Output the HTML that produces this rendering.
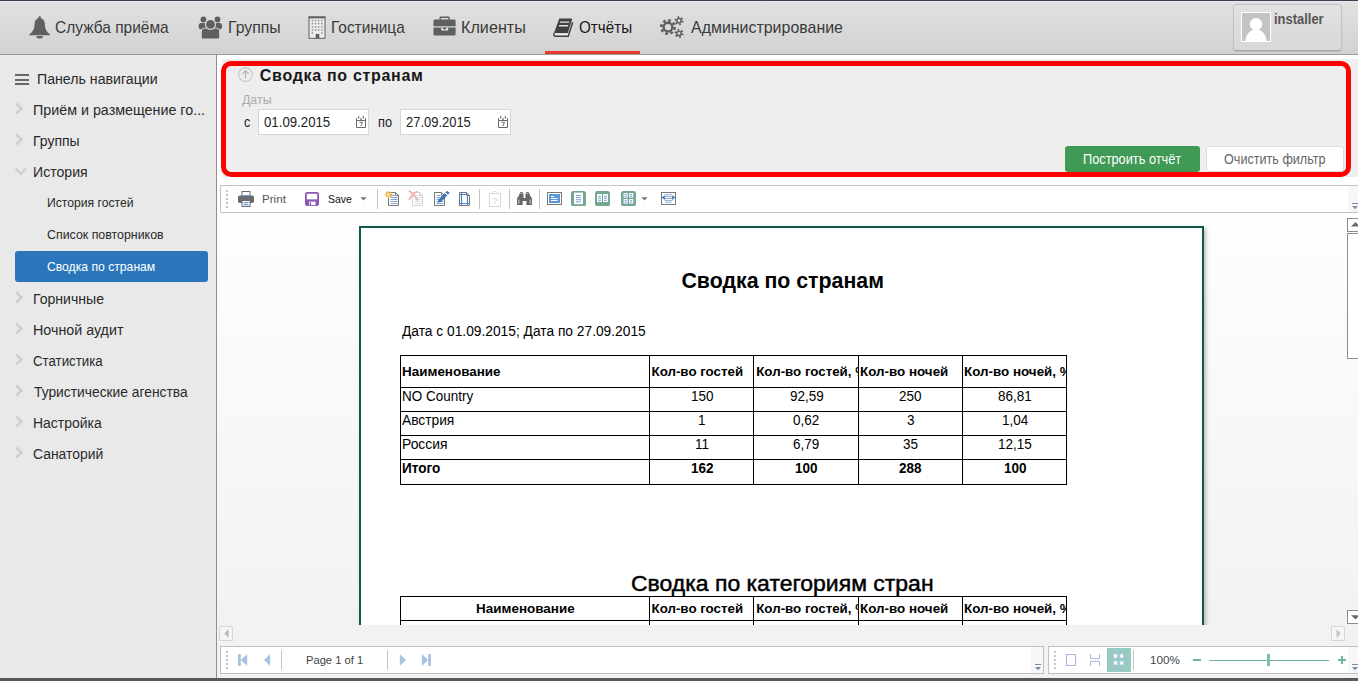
<!DOCTYPE html>
<html lang="ru">
<head>
<meta charset="utf-8">
<title>Сводка по странам</title>
<style>
*{box-sizing:border-box}
html,body{margin:0;padding:0}
body{width:1358px;height:681px;overflow:hidden;position:relative;background:#fff;font-family:"Liberation Sans",sans-serif}
.a{position:absolute}
.t{position:absolute;white-space:nowrap;transform-origin:0 0;z-index:5}
#top{left:0;top:0;width:1358px;height:55px;background:linear-gradient(#e1e1e1,#d2d2d2);border-top:1px solid #364252;border-bottom:1px solid #9a9a9a;box-shadow:inset 0 1px 0 #e9e9e9}
#side{left:0;top:55px;width:217px;height:623px;background:#e9e9e9;border-right:1px solid #8f8f8f}
#sel{left:15px;top:251px;width:193px;height:31px;background:#2b76bb;border-radius:3px}
#foot{left:0;top:678px;width:1358px;height:3px;background:#585858}
#fp{left:222px;top:59px;width:1136px;height:118px;background:#eee}
#fr{left:221px;top:61px;width:1130px;height:116px;border:5px solid #fe0000;border-radius:10px}
.inp{background:#fff;border:1px solid #d6d6d6;height:26px;top:109px}
.btn{top:146px;height:26px;border-radius:3px}
#tb1{left:220px;top:185px;width:1140px;height:28px;background:#fff;border:1px solid #c2c2c2}
#view{left:217px;top:213px;width:1141px;height:465px;background:linear-gradient(#fefefe,#f2f2f2 412px,#f2f2f2)}
#page{left:142px;top:13px;width:845px;height:420px;background:#fff;border:2px solid #10574d;border-bottom:none;box-shadow:2px 2px 4px rgba(0,0,0,.25)}
.sep{width:1px;background:#c4c4c4}
.sb{background:#fff;border:1px solid #8c8c8c}
.hb{background:#f5f5f5;border:1px solid #d6d6d6}
.tb{background:#fff;border:1px solid #bfbfbf}
.clip{position:absolute;overflow:hidden;z-index:5}
.hl{position:absolute;height:1px;background:#000;left:400px;width:667px}
.vl{position:absolute;width:1px;background:#000}
</style>
</head>
<body>
<div id="top" class="a"></div>
<div id="side" class="a"></div>
<div id="sel" class="a"></div>
<div id="fp" class="a"></div>
<div id="fr" class="a"></div>
<div class="a inp" style="left:258px;width:111px"></div>
<div class="a inp" style="left:400px;width:111px"></div>
<div class="a btn" style="left:1065px;width:135px;background:#3f9a55"></div>
<div class="a btn" style="left:1206px;width:138px;background:#fff;border:1px solid #dcdcdc"></div>
<!-- filter icons -->
<svg class="a" style="left:238px;top:67px" width="15" height="15" viewBox="0 0 15 15"><circle cx="7.500" cy="7.500" r="6.900" fill="none" stroke="#c4c4c4" stroke-width="1.100"/><path d="M7.500 11.400V3.800M4.200 7L7.500 3.600L10.800 7" fill="none" stroke="#b2b2b2" stroke-width="1.200"/></svg>
<svg class="a" style="left:356px;top:116px" width="10" height="12" viewBox="0 0 10 12"><g fill="none" stroke="#6b6b6b"><path d="M.5 2v9.500h9V2M.5 4.500h9" stroke-width="1"/><path d="M2.700 0v2.600M7.300 0v2.600" stroke-width="1.100"/><path d="M5 2.200v2" stroke-width="1.400"/><path d="M3.400 6.300h3.200L4.700 10" stroke-width="1"/></g></svg>
<svg class="a" style="left:498px;top:116px" width="10" height="12" viewBox="0 0 10 12"><g fill="none" stroke="#6b6b6b"><path d="M.5 2v9.500h9V2M.5 4.500h9" stroke-width="1"/><path d="M2.700 0v2.600M7.300 0v2.600" stroke-width="1.100"/><path d="M5 2.200v2" stroke-width="1.400"/><path d="M3.400 6.300h3.200L4.700 10" stroke-width="1"/></g></svg>
<div id="view" class="a"></div>
<div id="tb1" class="a"></div>
<div class="a" style="left:217px;top:213px;width:1141px;height:412px;overflow:hidden"><div id="page" class="a"></div></div>
<!-- toolbar 1 icons -->
<div class="a" style="left:226px;top:190px;width:2px;height:2px;background:#c4c4c4"></div><div class="a" style="left:226px;top:194px;width:2px;height:2px;background:#c4c4c4"></div><div class="a" style="left:226px;top:198px;width:2px;height:2px;background:#c4c4c4"></div><div class="a" style="left:226px;top:202px;width:2px;height:2px;background:#c4c4c4"></div><div class="a" style="left:226px;top:206px;width:2px;height:2px;background:#c4c4c4"></div>
<svg class="a" style="left:238px;top:191px" width="16" height="16" viewBox="0 0 16 16"><rect x="0" y="4.500" width="16" height="7.500" rx="1.800" fill="#6b6b6b"/><rect x="4" y=".5" width="8" height="5" fill="#fff" stroke="#6b6b6b"/><rect x="4.500" y="4.200" width="7" height="1" fill="#4a86d0"/><rect x="4" y="9.500" width="8" height="6" fill="#fff" stroke="#6b6b6b"/><rect x="5.600" y="11.200" width="4.800" height="1" fill="#4a86d0"/><rect x="5.600" y="13.200" width="4.800" height="1" fill="#4a86d0"/></svg>
<svg class="a" style="left:305px;top:192px" width="14" height="14" viewBox="0 0 14 14"><rect x=".9" y=".9" width="12.200" height="12.200" rx="1.300" fill="#fff" stroke="#8e57b6" stroke-width="1.800"/><rect x="1" y="7.400" width="12" height="5.800" fill="#8e57b6"/><rect x="4" y="9.600" width="6.500" height="3.600" fill="#fff"/><rect x="4.800" y="10.300" width="1.300" height="2.900" fill="#8e57b6"/></svg>
<svg class="a" style="left:360px;top:197px" width="7" height="4" viewBox="0 0 7 4"><path d="M.3 .3h6.400L3.500 3.600z" fill="#7a7a7a"/></svg>
<div class="a sep" style="left:377px;top:189px;height:20px"></div>
<svg class="a" style="left:388px;top:191px;overflow:visible" width="12" height="15" viewBox="0 0 12 15"><path d="M.5 1.500h7l3 3v10H.5z" fill="#fff" stroke="#777"/><path d="M7.500 1.500v3h3" fill="none" stroke="#777"/><g stroke="#7ea3d4" stroke-width="1"><path d="M2.500 4.5h4"/><path d="M2.500 6.5h7"/><path d="M2.500 8.5h7"/><path d="M2.500 10.5h7"/><path d="M2.500 12.5h7"/></g><g stroke="#e9b646" stroke-width="1.300"><path d="M.5 -.2v7.400M-3.200 3.500h7.400M-2.100 .9l5.200 5.200M3.100 .9l-5.200 5.200"/></g><circle cx=".5" cy="3.500" r="1.100" fill="#fff"/></svg>
<svg class="a" style="left:412px;top:191px;overflow:visible" width="12" height="15" viewBox="0 0 12 15"><path d="M.5 1.500h7l3 3v10H.5z" fill="#fff" stroke="#d4d4d4"/><path d="M7.500 1.500v3h3" fill="none" stroke="#d4d4d4"/><g stroke="#d6e0ee" stroke-width="1"><path d="M2.500 4.5h4"/><path d="M2.500 6.5h7"/><path d="M2.500 8.5h7"/><path d="M2.500 10.5h7"/><path d="M2.500 12.5h7"/></g><g stroke="#f1b3a8" stroke-width="1.700" fill="none"><path d="M-3 -.5C0 2 3 5 6 9.500"/><path d="M5.500 .2C1.500 2.500 -1.500 5.500 -3 9"/></g></svg>
<svg class="a" style="left:434px;top:191px;overflow:visible" width="12" height="15" viewBox="0 0 12 15"><path d="M.5 1.500h7l3 3v10H.5z" fill="#fff" stroke="#777"/><path d="M7.500 1.500v3h3" fill="none" stroke="#777"/><g stroke="#7ea3d4" stroke-width="1"><path d="M2.500 4.5h4"/><path d="M2.500 6.5h7"/><path d="M2.500 8.5h7"/><path d="M2.500 10.5h7"/><path d="M2.500 12.5h7"/></g><path d="M13.300 -.3l2.400 2.400-1.700 1.700-2.400-2.400zM10.800 2.200l2.400 2.400-6.300 6.300-3.300 .9 .9-3.300z" fill="#3b76ba"/></svg>
<svg class="a" style="left:459px;top:191px" width="12" height="15" viewBox="0 0 12 15"><path d="M.5 1.500h7l3 3v10H.5z" fill="#fff" stroke="#777"/><path d="M7.500 1.500v3h3" fill="none" stroke="#777"/><g stroke="#4d86cc" stroke-width="1.200"><path d="M2.500 2v12M8.500 3.500v10.500M1 3.500h7M1 12.500h9"/></g></svg>
<div class="a sep" style="left:479px;top:189px;height:20px"></div>
<svg class="a" style="left:489px;top:191px" width="12" height="16" viewBox="0 0 12 16"><rect x=".5" y="2.500" width="11" height="13" fill="#fff" stroke="#d9d9d9"/><path d="M3.500 2.500c0-1 1-2.200 2.500-2.200s2.500 1.200 2.500 2.200z" fill="#fff" stroke="#d9d9d9"/><text x="6" y="12.500" font-family="Liberation Sans, sans-serif" font-size="9" fill="#c3d3ea" text-anchor="middle">?</text></svg>
<div class="a sep" style="left:509px;top:189px;height:20px"></div>
<svg class="a" style="left:517px;top:192px" width="15" height="13" viewBox="0 0 15 13"><g fill="#686868"><path d="M3.300 0h2.400v1.500h.8V6h2V1.500h.8V0h2.400v1.500h.8l.7 2.500 1.200 1.300.6 1.700v6H9.400V9H5.600v4H0V7l.6-1.700L1.800 4l.7-2.500h.8z"/></g><g fill="#d4d4d4"><rect x="1.300" y="7.500" width="1" height="4.300"/><rect x="12.700" y="7.500" width="1" height="4.300"/><rect x="3.800" y="1" width="1.200" height="1"/><rect x="10" y="1" width="1.200" height="1"/></g></svg>
<div class="a sep" style="left:539px;top:189px;height:20px"></div>
<svg class="a" style="left:547px;top:192px" width="15" height="13" viewBox="0 0 15 13"><rect x=".5" y=".5" width="14" height="12" fill="#fff" stroke="#777"/><rect x="2" y="2" width="11" height="9" fill="#5c97d8"/><g stroke="#fff" stroke-width="1"><path d="M4 4.500h3M4 6.500h6.500M4 8.500h6.500"/></g></svg>
<svg class="a" style="left:571px;top:191px" width="15" height="15" viewBox="0 0 15 15"><rect width="15" height="15" rx="2.600" fill="#72a791"/><rect x="3" y="1.600" width="9" height="11.600" fill="#fff"/><g stroke="#7ea3d4" stroke-width="1"><path d="M5 4.500h5M5 6.600h5M5 8.700h5M5 10.800h5"/></g></svg>
<svg class="a" style="left:595px;top:191px" width="15" height="15" viewBox="0 0 15 15"><rect width="15" height="15" rx="2.600" fill="#72a791"/><rect x="2" y="3" width="5" height="8" fill="#fff"/><rect x="8" y="3" width="5" height="8" fill="#fff"/><g stroke="#7ea3d4" stroke-width="1"><path d="M3 5.300h3M3 7.300h3M3 9.300h3M9 5.300h3M9 7.300h3M9 9.300h3"/></g></svg>
<svg class="a" style="left:621px;top:191px" width="15" height="15" viewBox="0 0 15 15"><rect width="15" height="15" rx="2.600" fill="#72a791"/><rect x="2.600" y="2" width="4.200" height="4.600" fill="#fff"/><rect x="8.100" y="2" width="4.200" height="4.600" fill="#fff"/><rect x="2.600" y="8" width="4.200" height="4.600" fill="#fff"/><rect x="8.100" y="8" width="4.200" height="4.600" fill="#fff"/><g stroke="#7ea3d4" stroke-width="1"><path d="M3.600 3.600h2.200M3.600 5.300h2.200M9.100 3.600h2.200M9.100 5.300h2.200M3.600 9.600h2.200M3.600 11.300h2.200M9.100 9.600h2.200M9.100 11.300h2.200"/></g></svg>
<svg class="a" style="left:641px;top:197px" width="7" height="4" viewBox="0 0 7 4"><path d="M.3 .3h6.400L3.500 3.600z" fill="#7a7a7a"/></svg>
<svg class="a" style="left:661px;top:192px" width="15" height="13" viewBox="0 0 15 13"><rect x=".5" y=".5" width="14" height="12" fill="#fff" stroke="#777"/><g stroke="#8aaad6" stroke-width="1"><path d="M4 2.700h7M3.500 4.600h8M3.500 6.500h8M3.500 8.400h8M4.500 10.300h6"/></g><path d="M.8 5.500L3.800 3v5zM14.200 5.500L11.200 3v5z" fill="#3b76ba"/></svg>
<div class="a" style="left:1348px;top:186px;width:10px;height:26px;background:#f6f6f6"></div>
<svg class="a" style="left:1352px;top:203px" width="6" height="7" viewBox="0 0 6 7"><path d="M0 .5h6" stroke="#7d8da8" stroke-width="1"/><path d="M0 3h6L3 6.300z" fill="#7d8da8"/></svg>

<div class="hl" style="top:355px"></div>
<div class="hl" style="top:387px"></div>
<div class="hl" style="top:411px"></div>
<div class="hl" style="top:435px"></div>
<div class="hl" style="top:459px"></div>
<div class="hl" style="top:484px"></div>
<div class="hl" style="top:596px"></div>
<div class="hl" style="top:620px"></div>
<div class="vl" style="left:400px;top:355px;height:130px"></div>
<div class="vl" style="left:400px;top:596px;height:29px"></div>
<div class="vl" style="left:649px;top:355px;height:130px"></div>
<div class="vl" style="left:649px;top:596px;height:29px"></div>
<div class="vl" style="left:753px;top:355px;height:130px"></div>
<div class="vl" style="left:753px;top:596px;height:29px"></div>
<div class="vl" style="left:858px;top:355px;height:130px"></div>
<div class="vl" style="left:858px;top:596px;height:29px"></div>
<div class="vl" style="left:962px;top:355px;height:130px"></div>
<div class="vl" style="left:962px;top:596px;height:29px"></div>
<div class="vl" style="left:1066px;top:355px;height:130px"></div>
<div class="vl" style="left:1066px;top:596px;height:29px"></div>
<!-- sidebar icons -->
<div class="a" style="left:15px;top:74px;width:14px;height:2px;background:#686868"></div>
<div class="a" style="left:15px;top:78.500px;width:14px;height:2px;background:#686868"></div>
<div class="a" style="left:15px;top:83px;width:14px;height:2px;background:#686868"></div>
<svg class="a" style="left:14px;top:102px" width="11" height="13" viewBox="0 0 11 13"><path d="M2.200 1.500L7.600 6.500L2.200 11.500" fill="none" stroke="#cfcfcf" stroke-width="2.400"/></svg>
<svg class="a" style="left:14px;top:133px" width="11" height="13" viewBox="0 0 11 13"><path d="M2.200 1.500L7.600 6.500L2.200 11.500" fill="none" stroke="#cfcfcf" stroke-width="2.400"/></svg>
<svg class="a" style="left:14px;top:166.5px" width="14" height="10" viewBox="0 0 14 10"><path d="M1.600 1.700L6.800 6.800L12 1.700" fill="none" stroke="#cfcfcf" stroke-width="2.400"/></svg>
<svg class="a" style="left:14px;top:291px" width="11" height="13" viewBox="0 0 11 13"><path d="M2.200 1.500L7.600 6.500L2.200 11.500" fill="none" stroke="#cfcfcf" stroke-width="2.400"/></svg>
<svg class="a" style="left:14px;top:322px" width="11" height="13" viewBox="0 0 11 13"><path d="M2.200 1.500L7.600 6.500L2.200 11.500" fill="none" stroke="#cfcfcf" stroke-width="2.400"/></svg>
<svg class="a" style="left:14px;top:353px" width="11" height="13" viewBox="0 0 11 13"><path d="M2.200 1.500L7.600 6.500L2.200 11.500" fill="none" stroke="#cfcfcf" stroke-width="2.400"/></svg>
<svg class="a" style="left:14px;top:384px" width="11" height="13" viewBox="0 0 11 13"><path d="M2.200 1.500L7.600 6.500L2.200 11.500" fill="none" stroke="#cfcfcf" stroke-width="2.400"/></svg>
<svg class="a" style="left:14px;top:415px" width="11" height="13" viewBox="0 0 11 13"><path d="M2.200 1.500L7.600 6.500L2.200 11.500" fill="none" stroke="#cfcfcf" stroke-width="2.400"/></svg>
<svg class="a" style="left:14px;top:446px" width="11" height="13" viewBox="0 0 11 13"><path d="M2.200 1.500L7.600 6.500L2.200 11.500" fill="none" stroke="#cfcfcf" stroke-width="2.400"/></svg>
<!-- header icons -->
<svg class="a" style="left:28.500px;top:15.500px" width="22" height="23" viewBox="0 0 22 23"><path fill="#5f5f5f" d="M10.700 .3c-.7 0-1.200.5-1.200 1.200v.7C7 2.900 5.600 5 5.600 8c0 5-2 8.200-5.200 10.400-.3.300-.1.800.3.800h20c.4 0 .6-.5.3-.8C17.800 16.200 15.800 13 15.800 8c0-3-1.400-5.100-3.900-5.800v-.7c0-.7-.5-1.200-1.200-1.200zM7.400 20.100a3.300 2.500 0 0 0 6.600 0z"/></svg>
<svg class="a" style="left:197.500px;top:15.500px" width="25" height="23" viewBox="0 0 25 23"><g fill="#5f5f5f"><circle cx="5.400" cy="3.500" r="2.900"/><circle cx="19.500" cy="3.500" r="2.900"/><rect x=".7" y="7.100" width="7.500" height="6.300" rx="2.600"/><rect x="16.700" y="7.100" width="7.300" height="6.300" rx="2.600"/></g><path fill="#5f5f5f" stroke="#dfdfdf" stroke-width="1.300" paint-order="stroke" d="M3.800 21.500v-6c0-2 1.200-3.100 3-3.100h11.400c1.800 0 3 1.100 3 3.100v6c0 .6-.4 1-1 1H4.800c-.6 0-1-.4-1-1z"/><circle cx="12.500" cy="8.400" r="5.500" fill="#dfdfdf"/><circle cx="12.500" cy="8.400" r="4.400" fill="#5f5f5f"/></svg>
<svg class="a" style="left:307.500px;top:15.500px" width="18" height="23" viewBox="0 0 18 23"><rect x="1" y="1" width="16" height="21.300" fill="#ececec" stroke="#5f5f5f" stroke-width="1"/><rect x=".5" y=".5" width="17" height="1.900" fill="#5f5f5f"/><g fill="#8c8c8c"><rect x="3.7" y="3.8" width="1.400" height="1.500"/><rect x="6.8" y="3.8" width="1.400" height="1.500"/><rect x="9.9" y="3.8" width="1.400" height="1.500"/><rect x="13.1" y="3.8" width="1.400" height="1.500"/><rect x="3.7" y="6.8" width="1.400" height="1.500"/><rect x="6.8" y="6.8" width="1.400" height="1.500"/><rect x="9.9" y="6.8" width="1.400" height="1.500"/><rect x="13.1" y="6.8" width="1.400" height="1.500"/><rect x="3.7" y="10.2" width="1.400" height="1.500"/><rect x="6.8" y="10.2" width="1.400" height="1.500"/><rect x="9.9" y="10.2" width="1.400" height="1.500"/><rect x="13.1" y="10.2" width="1.400" height="1.500"/><rect x="3.7" y="13.3" width="1.400" height="1.500"/><rect x="6.8" y="13.3" width="1.400" height="1.500"/><rect x="9.9" y="13.3" width="1.400" height="1.500"/><rect x="13.1" y="13.3" width="1.400" height="1.500"/><rect x="3.7" y="16.3" width="1.400" height="1.500"/><rect x="13.1" y="16.3" width="1.400" height="1.500"/></g><rect x="7.700" y="17.900" width="3.600" height="4.400" fill="#5f5f5f"/></svg>
<svg class="a" style="left:432.500px;top:15.500px" width="23" height="20" viewBox="0 0 23 20"><g fill="#5f5f5f"><path d="M7.700 .4h7.800c.7 0 1.200.5 1.200 1.200v2.200h-1.500V2H8v1.800H6.500V1.600c0-.7.5-1.200 1.200-1.200z"/><path d="M2 3.500h19.100c.9 0 1.500.6 1.500 1.500v5.200H.5V5c0-.9.600-1.500 1.500-1.500z"/><path d="M.5 11.500h22.100v6.400c0 .9-.6 1.500-1.500 1.500H2c-.9 0-1.500-.6-1.500-1.500z"/></g><rect x="8.200" y="11.500" width="6.900" height="2.900" rx=".5" fill="#e2e2e2"/><rect x="10" y="11.500" width="3.200" height="1.700" fill="#5f5f5f"/></svg>
<svg class="a" style="left:552.500px;top:17.500px" width="21" height="20" viewBox="0 0 21 20"><path fill="#404040" d="M6.300 .5H18.500c.5 0 .7.300 .6.700L14.800 15.100H1z"/><path fill="#f0f0f0" d="M1.900 15.900H15l-.4 1.300H2.100z"/><path d="M1.300 15.200c-1 1.700-.1 3.100 1.500 3.100H15.200L19.700 4.300" fill="none" stroke="#404040" stroke-width="1.500"/><path fill="#e6e6e6" d="M7.300 3.500h9.300l-.4 1.300H6.900zM6.200 7.100h9.200l-.4 1.400H5.800z"/></svg>
<svg class="a" style="left:660px;top:16px" width="24" height="23" viewBox="0 0 24 23"><g fill="none" stroke="#5f5f5f"><circle cx="8" cy="11.100" r="4.400" stroke-width="2.400"/><circle cx="8" cy="11.100" r="6.700" stroke-width="2.600" stroke-dasharray="2.700 2.560"/><circle cx="19" cy="4.800" r="2.200" stroke-width="1.500"/><circle cx="19" cy="4.800" r="3.700" stroke-width="1.700" stroke-dasharray="1.700 2.170"/><circle cx="19" cy="17.400" r="2.200" stroke-width="1.500"/><circle cx="19" cy="17.400" r="3.700" stroke-width="1.700" stroke-dasharray="1.700 2.170"/></g></svg>
<div class="a" style="left:545px;top:51px;width:95px;height:3px;background:#e8392b"></div>
<!-- user box -->
<div class="a" style="left:1233px;top:4px;width:109px;height:47px;border:1px solid #c2c2c2;border-bottom-color:#a8a8a8;border-radius:4px;background:linear-gradient(#e1e1e1,#d8d8d8);box-shadow:0 1px 1px rgba(0,0,0,.12)"></div>
<svg class="a" style="left:1241px;top:12px" width="30" height="30" viewBox="0 0 30 30"><rect x=".5" y=".5" width="29" height="29" fill="#c3c3c3" stroke="#fff"/><circle cx="15" cy="12.200" r="6.200" fill="#fff"/><path fill="#fff" d="M4.500 29c.3-6.500 4.500-11.800 10.500-11.800S25.200 22.500 25.500 29z"/></svg>
<!-- scrollbars -->
<div class="a sb" style="left:1347px;top:218px;width:14px;height:14px"></div>
<svg class="a" style="left:1351px;top:222px" width="7" height="5" viewBox="0 0 7 5"><path d="M0 4.500L4.500 0L9 4.500z" fill="#6a6a6a"/></svg>
<div class="a sb" style="left:1347px;top:233px;width:14px;height:126px"></div>
<div class="a sb" style="left:1347px;top:610px;width:14px;height:14px"></div>
<svg class="a" style="left:1351px;top:615px" width="7" height="5" viewBox="0 0 7 5"><path d="M0 .2h9L4.500 4.500z" fill="#6a6a6a"/></svg>
<div class="a hb" style="left:219px;top:626px;width:14px;height:15px"></div>
<svg class="a" style="left:224px;top:629px" width="5" height="9" viewBox="0 0 5 9"><path d="M4.500 .3v8.400L.3 4.500z" fill="#b8b8b8"/></svg>
<div class="a hb" style="left:1331px;top:626px;width:14px;height:15px"></div>
<svg class="a" style="left:1336px;top:629px" width="5" height="9" viewBox="0 0 5 9"><path d="M.5 .3v8.400L4.700 4.500z" fill="#c4c4c4"/></svg>
<!-- bottom toolbars -->
<div class="a tb" style="left:220px;top:646px;width:824px;height:28px"></div>
<div class="a" style="left:1031px;top:647px;width:12px;height:26px;background:#f7f7f7"></div>
<svg class="a" style="left:1035px;top:664px" width="6" height="7" viewBox="0 0 6 7"><path d="M0 .5h6" stroke="#7d8da8" stroke-width="1"/><path d="M0 3h6L3 6.300z" fill="#7d8da8"/></svg>
<div class="a tb" style="left:1048px;top:646px;width:320px;height:28px"></div>
<div class="a" style="left:1348px;top:647px;width:10px;height:26px;background:#f7f7f7"></div>
<svg class="a" style="left:1352px;top:664px" width="6" height="7" viewBox="0 0 6 7"><path d="M0 .5h6" stroke="#7d8da8" stroke-width="1"/><path d="M0 3h6L3 6.300z" fill="#7d8da8"/></svg>
<div class="a" style="left:226px;top:651px;width:2px;height:2px;background:#c4c4c4"></div><div class="a" style="left:226px;top:655px;width:2px;height:2px;background:#c4c4c4"></div><div class="a" style="left:226px;top:659px;width:2px;height:2px;background:#c4c4c4"></div><div class="a" style="left:226px;top:663px;width:2px;height:2px;background:#c4c4c4"></div><div class="a" style="left:226px;top:667px;width:2px;height:2px;background:#c4c4c4"></div>
<div class="a" style="left:1054px;top:651px;width:2px;height:2px;background:#c4c4c4"></div><div class="a" style="left:1054px;top:655px;width:2px;height:2px;background:#c4c4c4"></div><div class="a" style="left:1054px;top:659px;width:2px;height:2px;background:#c4c4c4"></div><div class="a" style="left:1054px;top:663px;width:2px;height:2px;background:#c4c4c4"></div><div class="a" style="left:1054px;top:667px;width:2px;height:2px;background:#c4c4c4"></div>
<svg class="a" style="left:238px;top:654px" width="10" height="12" viewBox="0 0 10 12"><path d="M0 0h2.800v12H0zM9.200 0v12L2.800 6z" fill="#a9c4e1"/></svg>
<svg class="a" style="left:264px;top:654px" width="7" height="12" viewBox="0 0 7 12"><path d="M6.200 0v12L0 6z" fill="#a9c4e1"/></svg>
<div class="a sep" style="left:281px;top:650px;height:20px"></div>
<div class="a sep" style="left:387px;top:650px;height:20px"></div>
<svg class="a" style="left:399px;top:654px" width="7" height="12" viewBox="0 0 7 12"><path d="M.8 0v12L7 6z" fill="#a9c4e1"/></svg>
<svg class="a" style="left:421px;top:654px" width="10" height="12" viewBox="0 0 10 12"><path d="M7.200 0H10v12H7.200zM.8 0v12L7.200 6z" fill="#a9c4e1"/></svg>
<svg class="a" style="left:1066px;top:654px" width="10" height="12" viewBox="0 0 10 12"><rect x=".5" y=".5" width="9" height="11" fill="#fff" stroke="#9fbade"/></svg>
<svg class="a" style="left:1090px;top:654px" width="10" height="12" viewBox="0 0 10 12"><path d="M.5 0v4.500h9V0M.5 12V7.200h9V12" fill="none" stroke="#9fbade"/></svg>
<div class="a" style="left:1107px;top:648px;width:24px;height:24px;background:#97cac0"></div>
<svg class="a" style="left:1113px;top:653px" width="12" height="13" viewBox="0 0 12 13"><g fill="#fff" stroke="#b4c1e4" stroke-width=".8"><rect x=".7" y="1" width="3.600" height="4"/><rect x="6.900" y="1" width="3.600" height="4"/><rect x=".7" y="8" width="3.600" height="4"/><rect x="6.900" y="8" width="3.600" height="4"/></g></svg>
<div class="a sep" style="left:1133px;top:650px;height:20px"></div>
<div class="a" style="left:1193px;top:659px;width:8px;height:2px;background:#6fb3a4"></div>
<div class="a" style="left:1209px;top:660px;width:120px;height:1px;background:#6fb3a4"></div>
<div class="a" style="left:1267px;top:654px;width:3px;height:12px;background:#7fbcae"></div>
<div class="a" style="left:1338px;top:659px;width:8px;height:2px;background:#6fb3a4"></div>
<div class="a" style="left:1341px;top:656px;width:2px;height:8px;background:#6fb3a4"></div>
<div id="foot" class="a"></div>
<span class="t" style='left:55.23px;top:19.00px;font:400 17px "Liberation Sans", sans-serif;line-height:17px;color:#3a3a3a;transform:scaleX(0.9117);'>Служба приёма</span>
<span class="t" style='left:227.93px;top:19.00px;font:400 17px "Liberation Sans", sans-serif;line-height:17px;color:#3a3a3a;transform:scaleX(0.9313);'>Группы</span>
<span class="t" style='left:330.97px;top:19.00px;font:400 17px "Liberation Sans", sans-serif;line-height:17px;color:#3a3a3a;transform:scaleX(0.9065);'>Гостиница</span>
<span class="t" style='left:460.81px;top:19.00px;font:400 17px "Liberation Sans", sans-serif;line-height:17px;color:#3a3a3a;transform:scaleX(0.9522);'>Клиенты</span>
<span class="t" style='left:579.41px;top:19.00px;font:400 17px "Liberation Sans", sans-serif;line-height:17px;color:#1a1a1a;transform:scaleX(0.8956);'>Отчёты</span>
<span class="t" style='left:690.80px;top:19.00px;font:400 17px "Liberation Sans", sans-serif;line-height:17px;color:#3a3a3a;transform:scaleX(0.9374);'>Администрирование</span>
<span class="t" style='left:1273.96px;top:12.00px;font:700 14px "Liberation Sans", sans-serif;line-height:14px;color:#555;transform:scaleX(0.9243);'>installer</span>
<span class="t" style='left:36.57px;top:71.00px;font:400 15.5px "Liberation Sans", sans-serif;line-height:15.5px;color:#2a2a2a;transform:scaleX(0.9133);'>Панель навигации</span>
<span class="t" style='left:32.76px;top:102.00px;font:400 15.5px "Liberation Sans", sans-serif;line-height:15.5px;color:#2a2a2a;transform:scaleX(0.9222);'>Приём и размещение го...</span>
<span class="t" style='left:32.78px;top:133.00px;font:400 15.5px "Liberation Sans", sans-serif;line-height:15.5px;color:#2a2a2a;transform:scaleX(0.9039);'>Группы</span>
<span class="t" style='left:32.77px;top:164.00px;font:400 15.5px "Liberation Sans", sans-serif;line-height:15.5px;color:#2a2a2a;transform:scaleX(0.9095);'>История</span>
<span class="t" style='left:46.83px;top:196.00px;font:400 13px "Liberation Sans", sans-serif;line-height:13px;color:#2a2a2a;transform:scaleX(0.9362);'>История гостей</span>
<span class="t" style='left:47.18px;top:228.00px;font:400 13px "Liberation Sans", sans-serif;line-height:13px;color:#2a2a2a;transform:scaleX(0.9526);'>Список повторников</span>
<span class="t" style='left:47.19px;top:260.00px;font:400 13px "Liberation Sans", sans-serif;line-height:13px;color:#fff;transform:scaleX(0.9360);'>Сводка по странам</span>
<span class="t" style='left:32.77px;top:291.00px;font:400 15.5px "Liberation Sans", sans-serif;line-height:15.5px;color:#2a2a2a;transform:scaleX(0.9079);'>Горничные</span>
<span class="t" style='left:32.76px;top:322.00px;font:400 15.5px "Liberation Sans", sans-serif;line-height:15.5px;color:#2a2a2a;transform:scaleX(0.9211);'>Ночной аудит</span>
<span class="t" style='left:33.24px;top:353.00px;font:400 15.5px "Liberation Sans", sans-serif;line-height:15.5px;color:#2a2a2a;transform:scaleX(0.8564);'>Статистика</span>
<span class="t" style='left:33.62px;top:384.00px;font:400 15.5px "Liberation Sans", sans-serif;line-height:15.5px;color:#2a2a2a;transform:scaleX(0.8910);'>Туристические агенства</span>
<span class="t" style='left:32.78px;top:415.00px;font:400 15.5px "Liberation Sans", sans-serif;line-height:15.5px;color:#2a2a2a;transform:scaleX(0.8998);'>Настройка</span>
<span class="t" style='left:33.20px;top:446.00px;font:400 15.5px "Liberation Sans", sans-serif;line-height:15.5px;color:#2a2a2a;transform:scaleX(0.8971);'>Санаторий</span>
<span class="t" style='left:259.86px;top:68.00px;font:700 16px "Liberation Sans", sans-serif;line-height:16px;color:#181818;letter-spacing:0.689px;'>Сводка по странам</span>
<span class="t" style='left:241.64px;top:94.00px;font:400 12.5px "Liberation Sans", sans-serif;line-height:12.5px;color:#aaa;transform:scaleX(0.9886);'>Даты</span>
<span class="t" style='left:244.39px;top:115.00px;font:400 14px "Liberation Sans", sans-serif;line-height:14px;color:#222;transform:scaleX(0.9031);'>с</span>
<span class="t" style='left:264.34px;top:115.00px;font:400 14px "Liberation Sans", sans-serif;line-height:14px;color:#222;transform:scaleX(0.9449);'>01.09.2015</span>
<span class="t" style='left:377.57px;top:115.00px;font:400 14px "Liberation Sans", sans-serif;line-height:14px;color:#222;transform:scaleX(0.9149);'>по</span>
<span class="t" style='left:405.95px;top:115.00px;font:400 14px "Liberation Sans", sans-serif;line-height:14px;color:#222;transform:scaleX(0.9245);'>27.09.2015</span>
<span class="t" style='left:1082.98px;top:152.00px;font:400 14px "Liberation Sans", sans-serif;line-height:14px;color:#fff;transform:scaleX(0.9123);'>Построить отчёт</span>
<span class="t" style='left:1223.93px;top:152.00px;font:400 14px "Liberation Sans", sans-serif;line-height:14px;color:#666;transform:scaleX(0.9011);'>Очистить фильтр</span>
<span class="t" style='left:262.17px;top:194.00px;font:400 11.5px "Liberation Sans", sans-serif;line-height:11.5px;color:#555;transform:scaleX(1.0091);'>Print</span>
<span class="t" style='left:328.03px;top:194.00px;font:400 11.5px "Liberation Sans", sans-serif;line-height:11.5px;color:#111;transform:scaleX(0.9119);'>Save</span>
<span class="t" style='left:306.11px;top:655.00px;font:400 11.5px "Liberation Sans", sans-serif;line-height:11.5px;color:#444;transform:scaleX(0.9708);'>Page 1 of 1</span>
<span class="t" style='left:1150.43px;top:655.00px;font:400 11.5px "Liberation Sans", sans-serif;line-height:11.5px;color:#444;transform:scaleX(1.0122);'>100%</span>
<span class="t" style='left:681.45px;top:271.00px;font:700 21.33px "Liberation Sans", sans-serif;line-height:21.33px;color:#000;'>Сводка по странам</span>
<span class="t" style='left:402.43px;top:324.00px;font:400 14px "Liberation Sans", sans-serif;line-height:14px;color:#000;transform:scaleX(0.9834);'>Дата с 01.09.2015; Дата по 27.09.2015</span>
<span class="t" style='left:631.35px;top:574.00px;font:400 21.33px "Liberation Sans", sans-serif;line-height:21.33px;color:#000;-webkit-text-stroke:.45px #000;transform:scaleX(1.0773);'>Сводка по категориям стран</span>
<span class="t" style='left:402.43px;top:365.00px;font:700 13.33px "Liberation Sans", sans-serif;line-height:13.33px;color:#000;transform:scaleX(1.0082);'>Наименование</span>
<span class="t" style='left:651.53px;top:365.00px;font:700 13.33px "Liberation Sans", sans-serif;line-height:13.33px;color:#000;'>Кол-во гостей</span>
<div class="clip" style="left:754px;top:365.00px;width:104px;height:17.33px"><span class="t" style='left:2.23px;top:0;font:700 13.33px "Liberation Sans", sans-serif;line-height:13.33px;color:#000;'>Кол-во гостей, %</span></div>
<span class="t" style='left:860.23px;top:365.00px;font:700 13.33px "Liberation Sans", sans-serif;line-height:13.33px;color:#000;transform:scaleX(1.0047);'>Кол-во ночей</span>
<div class="clip" style="left:963px;top:365.00px;width:103px;height:17.33px"><span class="t" style='left:1.23px;top:0;font:700 13.33px "Liberation Sans", sans-serif;line-height:13.33px;color:#000;transform:scaleX(1.0047);'>Кол-во ночей, %</span></div>
<span class="t" style='left:402.02px;top:389.00px;font:400 14px "Liberation Sans", sans-serif;line-height:14px;color:#000;transform:scaleX(0.9630);'>NO Country</span>
<span class="t" style='left:690.79px;top:389.00px;font:400 14px "Liberation Sans", sans-serif;line-height:14px;color:#000;transform:scaleX(0.9630);'>150</span>
<span class="t" style='left:789.64px;top:389.00px;font:400 14px "Liberation Sans", sans-serif;line-height:14px;color:#000;transform:scaleX(0.9630);'>92,59</span>
<span class="t" style='left:899.36px;top:389.00px;font:400 14px "Liberation Sans", sans-serif;line-height:14px;color:#000;transform:scaleX(0.9630);'>250</span>
<span class="t" style='left:998.17px;top:389.00px;font:400 14px "Liberation Sans", sans-serif;line-height:14px;color:#000;transform:scaleX(0.9630);'>86,81</span>
<span class="t" style='left:402.20px;top:413.00px;font:400 14px "Liberation Sans", sans-serif;line-height:14px;color:#000;transform:scaleX(0.9830);'>Австрия</span>
<span class="t" style='left:698.36px;top:413.00px;font:400 14px "Liberation Sans", sans-serif;line-height:14px;color:#000;transform:scaleX(0.9630);'>1</span>
<span class="t" style='left:793.45px;top:413.00px;font:400 14px "Liberation Sans", sans-serif;line-height:14px;color:#000;transform:scaleX(0.9630);'>0,62</span>
<span class="t" style='left:906.99px;top:413.00px;font:400 14px "Liberation Sans", sans-serif;line-height:14px;color:#000;transform:scaleX(0.9630);'>3</span>
<span class="t" style='left:1001.55px;top:413.00px;font:400 14px "Liberation Sans", sans-serif;line-height:14px;color:#000;transform:scaleX(0.9630);'>1,04</span>
<span class="t" style='left:401.99px;top:437.00px;font:400 14px "Liberation Sans", sans-serif;line-height:14px;color:#000;transform:scaleX(0.9918);'>Россия</span>
<span class="t" style='left:695.11px;top:437.00px;font:400 14px "Liberation Sans", sans-serif;line-height:14px;color:#000;transform:scaleX(0.9630);'>11</span>
<span class="t" style='left:793.35px;top:437.00px;font:400 14px "Liberation Sans", sans-serif;line-height:14px;color:#000;transform:scaleX(0.9630);'>6,79</span>
<span class="t" style='left:903.24px;top:437.00px;font:400 14px "Liberation Sans", sans-serif;line-height:14px;color:#000;transform:scaleX(0.9630);'>35</span>
<span class="t" style='left:997.90px;top:437.00px;font:400 14px "Liberation Sans", sans-serif;line-height:14px;color:#000;transform:scaleX(0.9630);'>12,15</span>
<span class="t" style='left:402.22px;top:461.00px;font:700 14px "Liberation Sans", sans-serif;line-height:14px;color:#000;transform:scaleX(0.9692);'>Итого</span>
<span class="t" style='left:690.89px;top:461.00px;font:700 14px "Liberation Sans", sans-serif;line-height:14px;color:#000;transform:scaleX(0.9630);'>162</span>
<span class="t" style='left:795.09px;top:461.00px;font:700 14px "Liberation Sans", sans-serif;line-height:14px;color:#000;transform:scaleX(0.9630);'>100</span>
<span class="t" style='left:899.43px;top:461.00px;font:700 14px "Liberation Sans", sans-serif;line-height:14px;color:#000;transform:scaleX(0.9630);'>288</span>
<span class="t" style='left:1003.59px;top:461.00px;font:700 14px "Liberation Sans", sans-serif;line-height:14px;color:#000;transform:scaleX(0.9630);'>100</span>
<span class="t" style='left:476.13px;top:602.00px;font:700 13.33px "Liberation Sans", sans-serif;line-height:13.33px;color:#000;transform:scaleX(1.0092);'>Наименование</span>
<span class="t" style='left:651.53px;top:602.00px;font:700 13.33px "Liberation Sans", sans-serif;line-height:13.33px;color:#000;'>Кол-во гостей</span>
<div class="clip" style="left:754px;top:602.00px;width:104px;height:17.33px"><span class="t" style='left:2.23px;top:0;font:700 13.33px "Liberation Sans", sans-serif;line-height:13.33px;color:#000;'>Кол-во гостей, %</span></div>
<span class="t" style='left:860.23px;top:602.00px;font:700 13.33px "Liberation Sans", sans-serif;line-height:13.33px;color:#000;transform:scaleX(1.0047);'>Кол-во ночей</span>
<div class="clip" style="left:963px;top:602.00px;width:103px;height:17.33px"><span class="t" style='left:1.23px;top:0;font:700 13.33px "Liberation Sans", sans-serif;line-height:13.33px;color:#000;transform:scaleX(1.0047);'>Кол-во ночей, %</span></div>

</body></html>
